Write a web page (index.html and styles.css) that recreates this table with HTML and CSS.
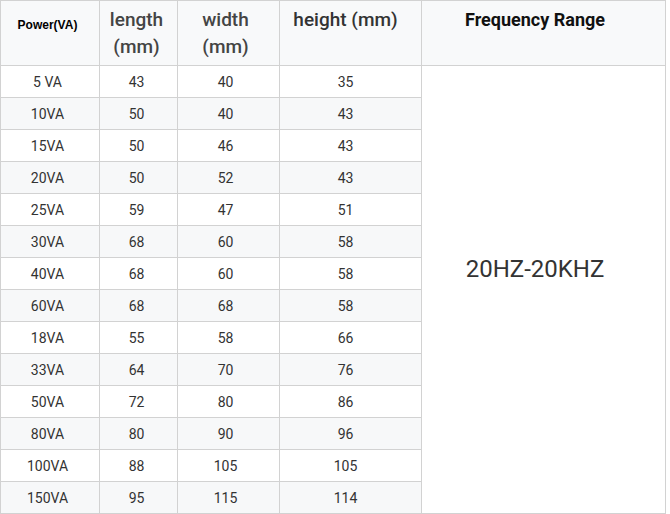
FILE: index.html
```html
<!DOCTYPE html>
<html>
<head>
<meta charset="utf-8">
<link rel="stylesheet" href="styles.css">
</head>
<body>
<table class="spec">
  <colgroup>
    <col class="c1"><col class="c2"><col class="c3"><col class="c4"><col class="c5">
  </colgroup>
  <thead>
    <tr>
      <th class="h-power"><span class="power">Power(VA)</span></th>
      <th>length<br>(mm)</th>
      <th>width<br>(mm)</th>
      <th class="h-height">height (mm)</th>
      <th class="h-freq">Frequency Range</th>
    </tr>
  </thead>
  <tbody>
    <tr><td>5 VA</td><td>43</td><td>40</td><td>35</td><td class="freq" rowspan="14">20HZ-20KHZ</td></tr>
    <tr class="alt"><td>10VA</td><td>50</td><td>40</td><td>43</td></tr>
    <tr><td>15VA</td><td>50</td><td>46</td><td>43</td></tr>
    <tr class="alt"><td>20VA</td><td>50</td><td>52</td><td>43</td></tr>
    <tr><td>25VA</td><td>59</td><td>47</td><td>51</td></tr>
    <tr class="alt"><td>30VA</td><td>68</td><td>60</td><td>58</td></tr>
    <tr><td>40VA</td><td>68</td><td>60</td><td>58</td></tr>
    <tr class="alt"><td>60VA</td><td>68</td><td>68</td><td>58</td></tr>
    <tr><td>18VA</td><td>55</td><td>58</td><td>66</td></tr>
    <tr class="alt"><td>33VA</td><td>64</td><td>70</td><td>76</td></tr>
    <tr><td>50VA</td><td>72</td><td>80</td><td>86</td></tr>
    <tr class="alt"><td>80VA</td><td>80</td><td>90</td><td>96</td></tr>
    <tr><td>100VA</td><td>88</td><td>105</td><td>105</td></tr>
    <tr class="alt"><td>150VA</td><td>95</td><td>115</td><td>114</td></tr>
  </tbody>
</table>
</body>
</html>
```

FILE: styles.css
```css
html, body {
  margin: 0;
  padding: 0;
  background: #ffffff;
}
.spec {
  border-collapse: collapse;
  table-layout: fixed;
  width: 665px;
  font-family: Roboto, "Liberation Sans", sans-serif;
  color: #333333;
}
.c1 { width: 99px; }
.c2 { width: 78px; }
.c3 { width: 102px; }
.c4 { width: 142px; }
.c5 { width: 244px; }
.spec th, .spec td {
  border: 1px solid #d2d2d2;
  padding: 0;
  text-align: center;
}
.spec th:nth-child(1), .spec td:nth-child(1) { padding-right: 5px; }
.spec th:nth-child(2), .spec td:nth-child(2) { padding-right: 4px; }
.spec th:nth-child(3), .spec td:nth-child(3) { padding-right: 6px; }
.spec th:nth-child(4), .spec td:nth-child(4) { padding-right: 10px; }
.spec thead th {
  height: 65px;
  box-sizing: border-box;
  vertical-align: top;
  background: #f8f9fa;
  font-size: 19px;
  font-weight: 500;
  line-height: 27px;
  color: #444444;
  padding-top: 5px;
}
.spec thead th.h-height {
  color: #333333;
}
.spec thead th.h-freq {
  font-size: 18px;
  color: #111111;
  font-weight: 700;
  padding-right: 17px;
}
.power {
  display: block;
  margin-top: 11px;
  font-family: "Liberation Sans", Arial, sans-serif;
  font-weight: 700;
  font-size: 12px;
  line-height: 16px;
  color: #000000;
}
.spec tbody td {
  height: 32px;
  box-sizing: border-box;
  font-size: 14px;
  line-height: 16px;
  vertical-align: middle;
  background: #ffffff;
}
.spec tbody tr.alt td {
  background: #f7f8f9;
}
.spec tbody td.freq {
  background: #ffffff;
  font-size: 24px;
  line-height: 28px;
  color: #333333;
  padding-right: 17px;
  padding-bottom: 42px;
}
```
